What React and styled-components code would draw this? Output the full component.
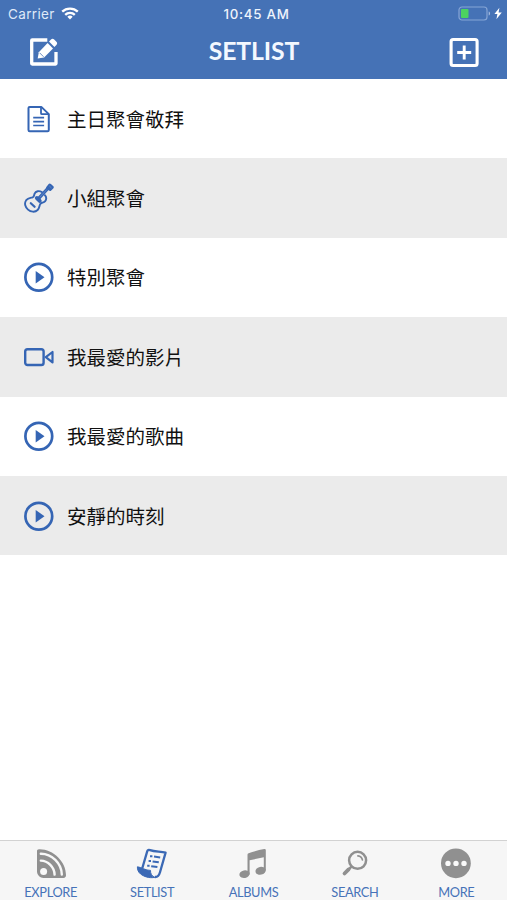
import React from "react";
import styled, { createGlobalStyle } from "styled-components";

const GlobalStyle = createGlobalStyle`
  * {
    box-sizing: border-box;
  }

  body {
    margin: 0;
    background: #fff;
    font-family: "Lato", "Noto Sans CJK TC", sans-serif;
  }
`;

const Screen = styled.div`
  display: flex;
  flex-direction: column;
  height: 900px;
  overflow: hidden;
`;

const Header = styled.header`
  height: 79px;
  flex: none;
  background: #4572b6;
  color: #fff;
`;

const StatusBar = styled.div`
  display: grid;
  grid-template-columns: 1fr auto 1fr;
  align-items: center;
  height: 27px;
  padding: 0 5px 0 8px;
  font-family: "Inter", sans-serif;
  font-size: 13px;
`;

const StatusSide = styled.div`
  display: flex;
  align-items: center;
  justify-content: ${(props) => (props.$end ? "flex-end" : "flex-start")};
  gap: ${(props) => (props.$end ? "3px" : "6px")};
`;

const Carrier = styled.span`
  color: #dfe9f8;
  font-size: 13.5px;
  letter-spacing: 0.35px;
`;

const Time = styled.span`
  color: #eff4fc;
  font-size: 13.3px;
  font-weight: 500;
  letter-spacing: 0.75px;
  margin-left: 3px;
`;

const TitleBar = styled.div`
  display: flex;
  align-items: center;
  justify-content: space-between;
  height: 50px;
  padding: 0 27px 0 28px;
`;

const Title = styled.h1`
  margin: 0 0 2px;
  font-size: 24.8px;
  line-height: 30px;
  font-weight: 700;
  letter-spacing: -0.15px;
  color: #f3f8ff;
`;

const IconButton = styled.button`
  display: flex;
  padding: 0;
  border: 0;
  background: none;
  color: #fff;
`;

const List = styled.ul`
  flex: 1;
  margin: 0;
  padding: 0;
  list-style: none;
`;

const Row = styled.li`
  display: flex;
  align-items: center;
  gap: 13px;
  height: 79.4px;
  padding-left: 24px;
  color: #3565b4;

  &:nth-child(even) {
    background: #ebebeb;
  }
`;

const RowTitle = styled.span`
  font-family: "Noto Sans CJK TC", sans-serif;
  font-size: 19.5px;
  line-height: 28px;
  color: #111;
`;

const TabBar = styled.nav`
  display: grid;
  grid-template-columns: repeat(5, 1fr);
  height: 60px;
  flex: none;
  border-top: 1px solid #d2d2d2;
  background: #f6f6f6;
`;

const Tab = styled.a`
  display: flex;
  flex-direction: column;
  align-items: center;
  padding-top: 7px;
  color: ${(props) => (props.$active ? "#3b69b5" : "#909090")};
`;

const TabLabel = styled.span`
  margin-top: 4px;
  font-size: 12.8px;
  line-height: 16px;
  letter-spacing: -0.35px;
  color: #4672b8;
`;

const Wifi = () => (
  <svg width="18" height="13" viewBox="0 0 18 13" fill="none" stroke="#fff" strokeWidth="2.3">
    <path d="M1.2 4.7a11.2 11.2 0 0 1 15.6 0" />
    <path d="M4.2 7.9a6.8 6.8 0 0 1 9.6 0" />
    <path d="M9 12.4 6.3 9.8a4 4 0 0 1 5.4 0z" fill="#fff" stroke="none" />
  </svg>
);

const Battery = () => (
  <svg width="33" height="15" viewBox="0 0 33 15" fill="none">
    <rect x="1" y="1" width="28" height="13" rx="3" stroke="#86a5d5" strokeWidth="1.2" />
    <rect x="3" y="3" width="7.5" height="9" rx="1" fill="#4cd35f" />
    <path d="M30.7 5.5c1.8.5 1.8 3.5 0 4z" fill="#a3badf" />
  </svg>
);

const Bolt = () => (
  <svg width="8" height="13" viewBox="0 0 8 13" fill="#fff">
    <path d="M5.4.8.4 7.1h3L2.4 12.3 7.8 5.5H4.6z" />
  </svg>
);

const EditIcon = () => (
  <svg width="32" height="32" viewBox="0 0 32 32" fill="none">
    <path d="M19.3 4H4.2a.5.5 0 0 0-.5.5v23a.5.5 0 0 0 .5.5h23.3a.5.5 0 0 0 .5-.5V16" stroke="#fff" strokeWidth="3.3" />
    <path d="m10.8 16.2 8.8-9.2 5.4 5.4-8.9 9-6.4 1z" fill="#fff" />
    <path d="m21 5.6 2-2c1-1 2.2-1 3.2 0l2.2 2.2c1 1 1 2.1 0 3.1l-2 2z" fill="#fff" />
    <path d="m11.6 16.8 4 4" stroke="#4572b6" strokeWidth=".8" />
  </svg>
);

const AddIcon = () => (
  <svg width="32" height="32" viewBox="0 0 32 32" fill="none" stroke="#fff">
    <rect x="3.1" y="3.5" width="26" height="26" rx="2" strokeWidth="3.1" />
    <path d="M16.2 9.5v14M9.2 16.5h14" strokeWidth="2.9" />
  </svg>
);

const DocIcon = () => (
  <svg width="30" height="30" viewBox="0 0 30 30" fill="none" stroke="currentColor" strokeWidth="2" strokeLinejoin="round">
    <path d="M6.2 2.9h11.1l7.5 7.2v15.9a1.2 1.2 0 0 1-1.2 1.2H5.7a1.2 1.2 0 0 1-1.2-1.2V4.1a1.2 1.2 0 0 1 1.2-1.2z" />
    <path d="M17 3.1v6.1a1 1 0 0 0 1 1h6.6" strokeWidth="1.8" />
    <path d="M9.2 13.7h10.9M9.2 17.6h10.9M9.2 21.5h10.9" strokeWidth="1.7" />
  </svg>
);

const GuitarIcon = () => (
  <svg width="30" height="30" viewBox="0 0 30 30" fill="none" stroke="currentColor" strokeLinecap="round" strokeLinejoin="round">
    <path
      d="M17.8 9C15.2 7.4 11.7 8 10.6 10.6 9.8 12.6 10.4 13.6 8.6 14.3 6.2 15 3.8 15.2 2.2 17.2-.1 20.3 1.4 24.3 4 26.6 6.8 29 11 29.6 13.6 27 15.8 24.7 15.1 22.6 16.4 20.8 17.6 19.4 19.8 20 21.2 18.2 22.6 16.2 22.2 13.7 20.9 12.2"
      strokeWidth="1.9"
    />
    <path d="m14.3 15.8 9.8-10.7" strokeWidth="3.2" />
    <path d="m12.9 15 2.8 2.8" strokeWidth="4" />
    <path d="m24 4.6 1.8-2.2 2.2 1.9-2 2z" strokeWidth="3.4" fill="currentColor" />
    <path d="m6.8 20.2 3.8 3.6" strokeWidth="2.2" />
    <path d="m22.6 6.8-6.7 7.2M25.6 3.2l1.6 1.5" stroke="#7f9fd2" strokeWidth=".6" />
  </svg>
);

const PlayIcon = () => (
  <svg width="30" height="30" viewBox="0 0 30 30" fill="none">
    <circle cx="14.8" cy="15.2" r="13.4" stroke="currentColor" strokeWidth="2.7" />
    <path d="M11.7 8.9v12.6l8.8-6.3z" fill="currentColor" />
  </svg>
);

const VideoIcon = () => (
  <svg width="30" height="30" viewBox="0 0 30 30" fill="none" stroke="currentColor" strokeWidth="2.4" strokeLinejoin="round">
    <rect x="1.2" y="7.3" width="18.4" height="15.7" rx="2.3" />
    <path d="m21.8 15.2 6.7-5.2v10.4z" strokeWidth="2.2" />
  </svg>
);

const ExploreIcon = () => (
  <svg width="32" height="32" viewBox="0 0 32 32">
    <path
      d="M4 1.2C18 .8 31.2 13.8 31 27a2.8 2.8 0 0 1-2.6 2.9H8.6A6.3 6.3 0 0 1 2 24V3.1c0-1.2.8-1.9 2-1.9z"
      fill="currentColor"
    />
    <g fill="none" stroke="#f8f8f8" strokeWidth="2.4" strokeLinecap="round">
      <path d="M5.8 5.7C16.8 5.6 26.6 15.5 26.8 26.6" />
      <path d="M5.8 12.6c7.2 0 13.6 6.6 13.8 14" />
    </g>
    <circle cx="8.6" cy="23.6" r="3.5" fill="#f8f8f8" />
  </svg>
);

const SetlistIcon = () => (
  <svg width="32" height="32" viewBox="0 0 32 32" fill="none" stroke="currentColor" strokeLinejoin="round">
    <path d="M6.2 20.5 11.2 3.4C11.6 2 12.6 1.7 14 2.2 19 4 24.5 3.3 29.6 4.6L24 24.2C23 27.8 21.4 29.2 18.8 29" strokeWidth="2.3" />
    <path
      d="M1.4 18.8C5.6 19.2 9.5 22.6 14.5 22.4 14.4 25 15.4 28 18.8 29.4 13 30.4 8 28.6 4.6 26 2.4 24.3 1.2 21.6 1.4 18.8z"
      fill="currentColor"
      strokeWidth="1"
    />
    <path d="M14 8.2h2.4M12.6 13h2.4M11.2 17.8h2.4M18 8.6l6.2.9M16.6 13.4l6.2.9M15.2 18.2l6.2.9" strokeWidth="2" />
  </svg>
);

const AlbumsIcon = () => (
  <svg width="32" height="32" viewBox="0 0 32 32" fill="currentColor">
    <path d="M10.5 6.7q0-1.1 1.1-1.5Q19.2 2.5 27.3 1q1.5-.2 1.5 1.2V22.6h-2V9.3L12.6 12.2v14.2h-2.1z" />
    <ellipse cx="7.5" cy="26.2" rx="5.2" ry="3.8" transform="rotate(-12 7.5 26.2)" />
    <ellipse cx="23.6" cy="22.8" rx="5.2" ry="3.9" transform="rotate(-12 23.6 22.8)" />
  </svg>
);

const SearchIcon = () => (
  <svg width="32" height="32" viewBox="0 0 32 32" fill="none" stroke="currentColor" strokeLinecap="round">
    <circle cx="18.6" cy="12.3" r="8.5" strokeWidth="2.5" />
    <path d="m12.5 18.6-3.1 3" strokeWidth="2.5" />
    <path d="m9.6 21.4-4.1 4.1" strokeWidth="3.8" />
    <path d="M18.9 7.8c2.4.3 4.1 1.8 4.5 4.1" strokeWidth="1.7" />
  </svg>
);

const MoreIcon = () => (
  <svg width="32" height="32" viewBox="0 0 32 32">
    <circle cx="15.9" cy="15.3" r="14.9" fill="currentColor" />
    <g fill="#fafafa">
      <circle cx="8" cy="15.4" r="2.7" />
      <circle cx="16" cy="15.4" r="2.7" />
      <circle cx="24" cy="15.4" r="2.7" />
    </g>
  </svg>
);

const setlists = [
  { title: "主日聚會敬拜", Icon: DocIcon },
  { title: "小組聚會", Icon: GuitarIcon },
  { title: "特別聚會", Icon: PlayIcon },
  { title: "我最愛的影片", Icon: VideoIcon },
  { title: "我最愛的歌曲", Icon: PlayIcon },
  { title: "安靜的時刻", Icon: PlayIcon },
];

const tabs = [
  { label: "EXPLORE", Icon: ExploreIcon },
  { label: "SETLIST", Icon: SetlistIcon, active: true },
  { label: "ALBUMS", Icon: AlbumsIcon },
  { label: "SEARCH", Icon: SearchIcon },
  { label: "MORE", Icon: MoreIcon },
];

const App = () => {
  return (
    <Screen>
      <GlobalStyle />
      <Header>
        <StatusBar>
          <StatusSide>
            <Carrier>Carrier</Carrier>
            <Wifi />
          </StatusSide>
          <Time>10:45 AM</Time>
          <StatusSide $end>
            <Battery />
            <Bolt />
          </StatusSide>
        </StatusBar>
        <TitleBar>
          <IconButton aria-label="Edit">
            <EditIcon />
          </IconButton>
          <Title>SETLIST</Title>
          <IconButton aria-label="Add">
            <AddIcon />
          </IconButton>
        </TitleBar>
      </Header>
      <List>
        {setlists.map(({ title, Icon }) => (
          <Row key={title}>
            <Icon />
            <RowTitle>{title}</RowTitle>
          </Row>
        ))}
      </List>
      <TabBar>
        {tabs.map(({ label, Icon, active }) => (
          <Tab key={label} $active={active}>
            <Icon />
            <TabLabel>{label}</TabLabel>
          </Tab>
        ))}
      </TabBar>
    </Screen>
  );
};

export default App;
